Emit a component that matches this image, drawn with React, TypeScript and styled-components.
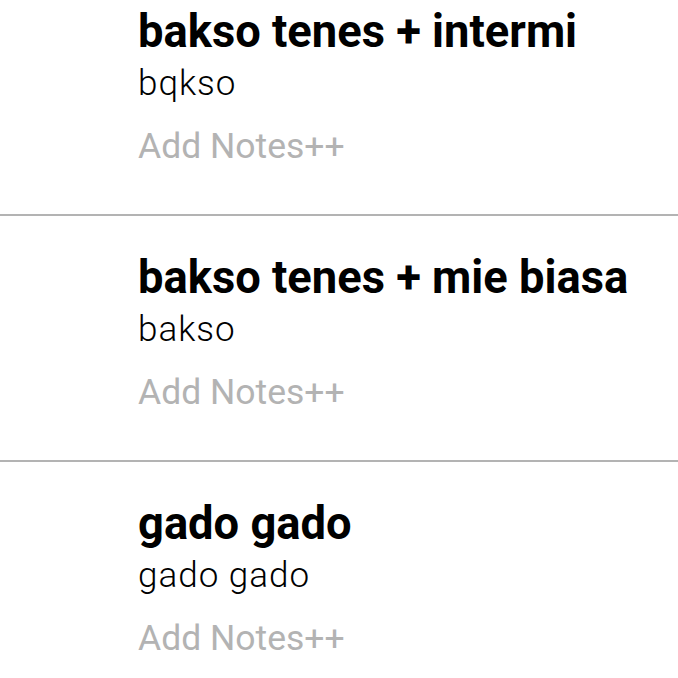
import styled, { createGlobalStyle } from "styled-components";

const GlobalStyle = createGlobalStyle`
  html, body {
    margin: 0;
    padding: 0;
    background: #ffffff;
    overflow: hidden;
  }
  body {
    font-family: Roboto, "Noto Sans", sans-serif;
    color: #000000;
  }
`;

// the list is scrolled a little: the first row's top is off screen
const List = styled.div`
  display: flex;
  flex-direction: column;
  margin-top: -30px;
`;

const Item = styled.div`
  display: flex;
  flex-direction: column;
  padding: 34px 20px 44px 138px;
  border-bottom: 2px solid #b3b3b3;
`;

const Title = styled.h3`
  margin: 0;
  font-size: 45.3px;
  font-weight: 700;
  line-height: 56px;
  white-space: nowrap;
`;

const Subtitle = styled.span`
  margin-top: 2px;
  font-size: 35px;
  font-weight: 300;
  letter-spacing: 1px;
  line-height: 44px;
`;

const Notes = styled.span`
  margin-top: 16px;
  font-size: 35.5px;
  font-weight: 400;
  line-height: 48px;
  color: #b3b3b3;
`;

const items = [
  { name: "bakso tenes + intermi", description: "bqkso" },
  { name: "bakso tenes + mie biasa", description: "bakso" },
  { name: "gado gado", description: "gado gado" },
];

function App() {
  return (
    <>
      <GlobalStyle />
      <List>
        {items.map((item) => (
          <Item key={item.name}>
            <Title>{item.name}</Title>
            <Subtitle>{item.description}</Subtitle>
            <Notes>Add Notes++</Notes>
          </Item>
        ))}
      </List>
    </>
  );
}

export default App;
